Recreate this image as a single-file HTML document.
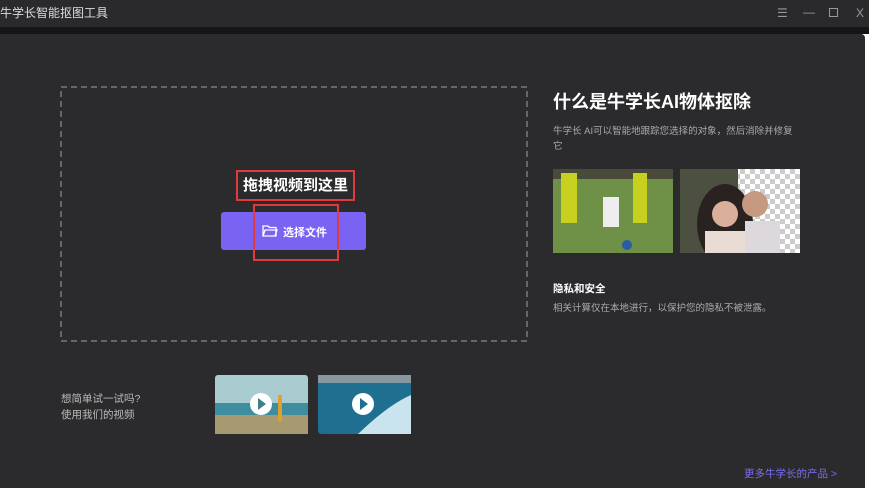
<!DOCTYPE html>
<html><head><meta charset="utf-8"><style>
*{margin:0;padding:0;box-sizing:border-box}
body{width:869px;height:488px;background:#fff;position:relative;overflow:hidden;font-family:"Liberation Sans","Noto Sans CJK SC",sans-serif}
.tb{position:absolute;left:0;top:0;width:869px;height:27px;background:#2a2a2c;color:#ddd;font-size:12px;line-height:27px}
.strip{position:absolute;left:0;top:27px;width:869px;height:7px;background:#151517}
.panel{position:absolute;left:0;top:34px;width:865px;height:454px;background:#2b2b2d;border-radius:0 4px 0 0}
.abs{position:absolute}
</style></head><body>
<div class="tb"><span style="position:absolute;left:0">牛学长智能抠图工具</span>
<span style="position:absolute;left:777px;color:#999;font-size:12px">☰</span>
<span style="position:absolute;left:803px;top:-1px;color:#999">—</span>
<span style="position:absolute;left:829px;top:8px;width:9px;height:9px;border:1px solid #999;line-height:0"></span>
<span style="position:absolute;left:856px;color:#999">X</span></div>
<div class="strip"></div>
<div class="panel"></div>
<svg class="abs" style="left:60px;top:86px" width="468" height="256"><rect x="1" y="1" width="466" height="254" fill="none" stroke="#7a7a7d" stroke-width="1.5" stroke-dasharray="6 4"/></svg>
<div class="abs" style="left:236px;top:170px;width:119px;height:31px;border:2px solid #e23a3a;color:#fff;font-size:15px;font-weight:bold;text-align:center;line-height:27px">拖拽视频到这里</div>
<div class="abs" style="left:221px;top:212px;width:145px;height:38px;background:#7a63f2;border-radius:3px"></div>
<div class="abs" style="left:253px;top:204px;width:86px;height:57px;border:2px solid #e23a3a"></div>
<svg class="abs" style="left:262px;top:225px" width="16" height="12" viewBox="0 0 16 12"><path d="M1 1h5l1.5 1.5H14v8.5H1z" fill="none" stroke="#fff" stroke-width="1.3"/><path d="M1 11l2-6h12l-2 6" fill="none" stroke="#fff" stroke-width="1.3"/></svg>
<div class="abs" style="left:283px;top:224px;color:#fff;font-size:11px;font-weight:bold">选择文件</div>
<div class="abs" style="left:553px;top:88px;color:#fff;font-size:18px;font-weight:bold">什么是牛学长AI物体抠除</div>
<div class="abs" style="left:553px;top:124px;width:240px;color:#aaa;font-size:9.5px;line-height:15px">牛学长 AI可以智能地跟踪您选择的对象，然后消除并修复它</div>
<svg class="abs" style="left:553px;top:169px" width="120" height="84"><rect width="120" height="84" fill="#6f9147"/><rect width="120" height="10" fill="#4a4a3a"/><rect x="8" y="4" width="16" height="50" fill="#c8d020"/><rect x="80" y="4" width="14" height="50" fill="#c8d020"/><rect x="50" y="28" width="16" height="30" fill="#eee"/><circle cx="74" cy="76" r="5" fill="#2a5aa8"/></svg>
<svg class="abs" style="left:680px;top:169px" width="120" height="84"><defs><pattern id="c" width="10" height="10" patternUnits="userSpaceOnUse"><rect width="10" height="10" fill="#fff"/><rect width="5" height="5" fill="#ccc"/><rect x="5" y="5" width="5" height="5" fill="#ccc"/></pattern></defs><rect width="120" height="84" fill="#4c5040"/><rect x="58" width="62" height="84" fill="url(#c)"/><ellipse cx="45" cy="55" rx="28" ry="40" fill="#2a2220"/><circle cx="45" cy="45" r="13" fill="#d9b09a"/><rect x="25" y="62" width="45" height="22" fill="#e8dcd4"/><circle cx="75" cy="35" r="13" fill="#c59a80"/><rect x="65" y="52" width="35" height="32" fill="#dcd8dc"/></svg>
<div class="abs" style="left:553px;top:281px;color:#fff;font-size:10.5px;font-weight:bold">隐私和安全</div>
<div class="abs" style="left:553px;top:300px;color:#aaa;font-size:9.5px">相关计算仅在本地进行，以保护您的隐私不被泄露。</div>
<div class="abs" style="left:61px;top:391px;color:#bbb;font-size:10.5px;line-height:16px">想简单试一试吗?<br>使用我们的视频</div>
<svg class="abs" style="left:215px;top:375px" width="93" height="59"><rect width="93" height="59" rx="3" fill="#a8ccd0"/><rect y="28" width="93" height="14" fill="#3f8ea0"/><rect y="40" width="93" height="19" fill="#a89a70"/><rect x="63" y="20" width="4" height="26" fill="#e0a030"/><circle cx="46" cy="29" r="11" fill="#fff"/><path d="M43 23l8 6-8 6z" fill="#3f7f8a"/></svg>
<svg class="abs" style="left:318px;top:375px" width="93" height="59"><rect width="93" height="59" rx="3" fill="#1f6f90"/><rect width="93" height="8" fill="#8898a0"/><path d="M40 59Q70 30 93 20V59z" fill="#c9e4ee"/><circle cx="45" cy="29" r="11" fill="#fff"/><path d="M42 23l8 6-8 6z" fill="#1f6f90"/></svg>
<div class="abs" style="left:744px;top:466px;color:#7a6ef0;font-size:10.5px">更多牛学长的产品 &gt;</div>
</body></html>
